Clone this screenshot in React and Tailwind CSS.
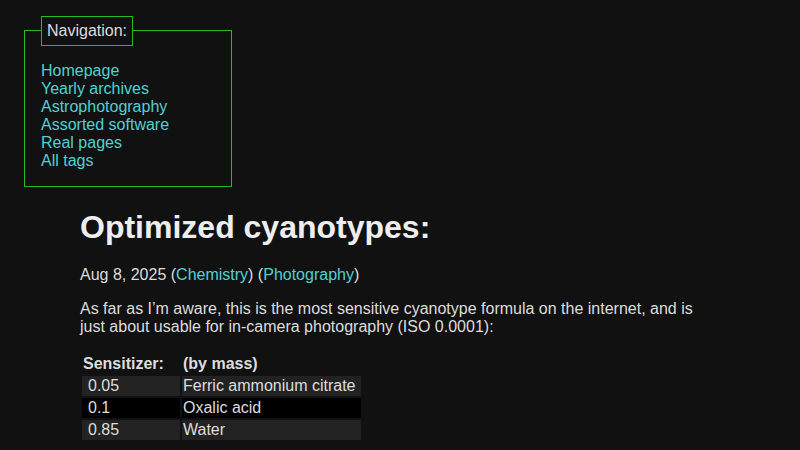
const navLinks = ['Homepage', 'Yearly archives', 'Astrophotography', 'Assorted software', 'Real pages', 'All tags'];

const rows = [
    { amount: '0.05', name: 'Ferric ammonium citrate', bg: 'bg-[#222222]' },
    { amount: '0.1', name: 'Oxalic acid', bg: 'bg-black' },
    { amount: '0.85', name: 'Water', bg: 'bg-[#222222]' },
];

const App = () => {
    return (
        <div className="min-h-[450px] bg-[#111111] text-[#dddddd] text-[16px] leading-[18px] font-['Liberation_Sans',Arial,sans-serif] pt-4 overflow-hidden">
            {/* Navigation box */}
            <nav className="ml-6 w-[208px]">
                <div className="flex items-end">
                    <div className="w-[17px] h-4 border-l border-t border-[#22bb22]" />
                    <div className="border border-[#22bb22] px-[5px] py-[5px]">Navigation:</div>
                    <div className="flex-1 h-4 border-r border-t border-[#22bb22]" />
                </div>
                <div className="flex flex-col border-l border-r border-b border-[#22bb22] pl-4 pt-4 pb-4">
                    {navLinks.map((link) => (
                        <a key={link} href="#" className="text-[#4fd1d1] w-fit">{link}</a>
                    ))}
                </div>
            </nav>

            {/* Article */}
            <div className="ml-20 w-[640px]">
                <h1 className="text-[32px] leading-[37px] font-bold text-[#eeeeee] mt-[22px] mb-5">Optimized cyanotypes:</h1>
                <p className="mb-4">
                    Aug 8, 2025 (<a href="#" className="text-[#4fd1d1]">Chemistry</a>) (<a href="#" className="text-[#4fd1d1]">Photography</a>)
                </p>
                <p className="mb-4">
                    As far as I’m aware, this is the most sensitive cyanotype formula on the internet, and is just about usable for in-camera photography (ISO 0.0001):
                </p>
                <table className="border-separate border-spacing-[2px]">
                    <thead>
                        <tr>
                            <th className="text-left font-bold px-px py-px w-[98px]">Sensitizer:</th>
                            <th className="text-left font-bold px-px py-px">(by mass)</th>
                        </tr>
                    </thead>
                    <tbody>
                        {rows.map((row) => (
                            <tr key={row.name}>
                                <td className={`${row.bg} pl-[6px] pr-px py-px`}>{row.amount}</td>
                                <td className={`${row.bg} pl-px pr-[6px] py-px`}>{row.name}</td>
                            </tr>
                        ))}
                    </tbody>
                </table>
            </div>
        </div>
    );
};

export default App;
